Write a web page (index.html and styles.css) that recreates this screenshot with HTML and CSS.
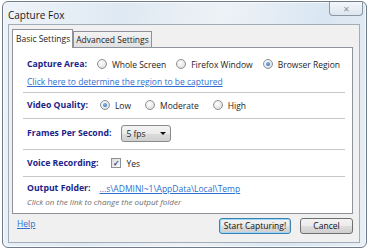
FILE: index.html
```html
<!DOCTYPE html>
<html lang="en">
<head>
    <meta charset="UTF-8">
    <title>Capture Fox</title>
    <link rel="stylesheet" href="styles.css">
</head>
<body>
    <div class="window">
        <div class="titlebar">
            <span class="title">Capture Fox</span>
            <span class="close">&#x2715;</span>
        </div>
        <div class="client">
            <div class="tabs">
                <span class="tab active">Basic Settings</span>
                <span class="tab">Advanced Settings</span>
            </div>
            <div class="panel">
                <div class="row row-capture">
                    <span class="label">Capture Area:</span>
                    <span class="option"><span class="radio"></span>Whole Screen</span>
                    <span class="option"><span class="radio"></span>Firefox Window</span>
                    <span class="option"><span class="radio checked"></span>Browser Region</span>
                </div>
                <div class="row row-link">
                    <a href="#" class="link">Click here to determine the region to be captured</a>
                </div>
                <div class="sep sep-1"></div>
                <div class="row row-quality">
                    <span class="label">Video Quality:</span>
                    <span class="option"><span class="radio checked"></span>Low</span>
                    <span class="option"><span class="radio"></span>Moderate</span>
                    <span class="option"><span class="radio"></span>High</span>
                </div>
                <div class="sep sep-2"></div>
                <div class="row row-fps">
                    <span class="label">Frames Per Second:</span>
                    <span class="select">5 fps<span class="arrow"></span></span>
                </div>
                <div class="sep sep-3"></div>
                <div class="row row-voice">
                    <span class="label">Voice Recording:</span>
                    <span class="option"><span class="check">&#x2713;</span>Yes</span>
                </div>
                <div class="sep sep-4"></div>
                <div class="row row-output">
                    <span class="label">Output Folder:</span>
                    <a href="#" class="link">...s\ADMINI~1\AppData\Local\Temp</a>
                </div>
                <div class="hint">Click on the link to change the output folder</div>
            </div>
            <div class="footer">
                <a href="#" class="link help">Help</a>
                <div class="buttons">
                    <span class="button default">Start Capturing!</span>
                    <span class="button">Cancel</span>
                </div>
            </div>
        </div>
    </div>
</body>
</html>
```

FILE: styles.css
```css
body {
    margin: 0;
    background: #fff;
    font-family: "Open Sans", "Noto Sans", sans-serif;
    font-size: 8.5px;
    color: #1e1e1e;
    white-space: nowrap;
}
.window {
    margin: 1px 0 0 2px;
    width: 363px;
    height: 245px;
    border: 1px solid #6f7b88;
    border-radius: 6px;
    background: linear-gradient(100deg, #eef3f8 0%, #dfe9f3 30%, #eef2f6 55%, #d9e6f2 80%, #e9eff5 100%);
    box-shadow: inset 0 0 0 1px #f6f9fc;
}
.titlebar { display: flex; justify-content: space-between; height: 22px; }
.title { padding: 6px 0 0 5px; font-size: 10px; color: #1a1a1a; }
.close {
    width: 32px;
    height: 13px;
    margin-right: 3px;
    border: 1px solid #8b97a5;
    border-top: none;
    border-radius: 0 0 4px 4px;
    background: linear-gradient(#f4f7fa, #dde5ee);
    color: #8a96a2;
    font-size: 8px;
    text-align: center;
    line-height: 13px;
}
.client {
    margin-left: 5px;
    width: 352px;
    height: 219px;
    border: 1px solid #a3adb8;
    background: #f0f0f0;
    padding: 3px 0 0 3px;
    box-sizing: border-box;
}
.tabs { display: flex; align-items: flex-end; height: 19px; }
.tab {
    height: 15px;
    padding: 0 2px;
    border: 1px solid #8e939b;
    border-bottom: none;
    background: linear-gradient(#f3f3f3, #e0e0e0);
    line-height: 15px;
    font-size: 8.5px;
}
.tab.active {
    height: 18px;
    padding: 0 2px 0 3px;
    background: #fff;
    line-height: 17px;
    position: relative;
    z-index: 1;
    margin-bottom: -1px;
}
.panel {
    width: 341px;
    height: 167px;
    border: 1px solid #8e939b;
    background: #fff;
    box-sizing: border-box;
    padding: 7px 7px 0 10px;
}
.row { display: flex; align-items: center; height: 18px; padding-left: 4px; }
.row > * { flex-shrink: 0; }
.label { font-weight: bold; color: #1b2489; font-size: 8.7px; }
.option { display: flex; align-items: center; gap: 5px; }
.radio {
    width: 8px;
    height: 8px;
    border: 1px solid #8d9094;
    border-radius: 50%;
    background: radial-gradient(circle at 40% 35%, #fff 0%, #e6e6e6 60%, #cfcfcf 100%);
    box-sizing: content-box;
    position: relative;
}
.radio.checked::after {
    content: "";
    position: absolute;
    left: 2px;
    top: 2px;
    width: 4px;
    height: 4px;
    border-radius: 50%;
    background: radial-gradient(circle at 40% 35%, #7fc0f0, #1a5fb4);
}
.row-capture .label { margin-right: 10px; }
.row-capture .option { margin-right: 10px; }
.row-link { height: 16px; }
.link { color: #2f6fcf; text-decoration: underline; }
.sep { height: 1px; background: #c7c7c7; }
.sep-1 { margin-top: 3px; }
.row-quality { margin-top: 4px; height: 16px; }
.row-quality .label { margin-right: 12px; }
.row-quality .option { margin-right: 14px; }
.sep-2 { margin-top: 5px; }
.row-fps { margin-top: 5px; }
.row-fps .label { margin-right: 10px; }
.select {
    display: flex;
    align-items: center;
    justify-content: space-between;
    width: 40px;
    height: 15px;
    padding: 0 4px;
    border: 1px solid #8a8a8a;
    border-radius: 3px;
    background: linear-gradient(#f4f4f4 0%, #ebebeb 50%, #dcdcdc 51%, #d0d0d0 100%);
}
.arrow {
    border-left: 3px solid transparent;
    border-right: 3px solid transparent;
    border-top: 3px solid #111;
}
.sep-3 { margin-top: 7px; }
.row-voice { margin-top: 5px; height: 16px; }
.row-voice .label { margin-right: 13px; }
.check {
    width: 8px;
    height: 8px;
    border: 1px solid #8d9094;
    background: linear-gradient(135deg, #dcdcdc, #fafafa);
    color: #2d3f8f;
    font-size: 8px;
    line-height: 8px;
    text-align: center;
    font-weight: bold;
}
.sep-4 { margin-top: 5px; }
.row-output { margin-top: 3px; height: 16px; }
.row-output .label { margin-right: 9px; }
.hint { padding-left: 4px; height: 12px; line-height: 12px; font-style: italic; color: #6d6d6d; font-size: 8px; }
.footer {
    display: flex;
    justify-content: space-between;
    align-items: flex-start;
    width: 341px;
    padding-top: 4px;
}
.help { margin: 0 0 0 5px; line-height: 12px; }
.buttons { display: flex; gap: 9px; }
.button {
    height: 14px;
    border: 1px solid #707070;
    border-radius: 3px;
    background: linear-gradient(#f2f2f2 0%, #ebebeb 50%, #dddddd 51%, #cfcfcf 100%);
    line-height: 14px;
    text-align: center;
    color: #111;
}
.button.default { width: 70px; border-color: #3c7fb1; box-shadow: inset 0 0 0 1px #9ad9f5; }
.button:last-child { width: 51px; }
```
